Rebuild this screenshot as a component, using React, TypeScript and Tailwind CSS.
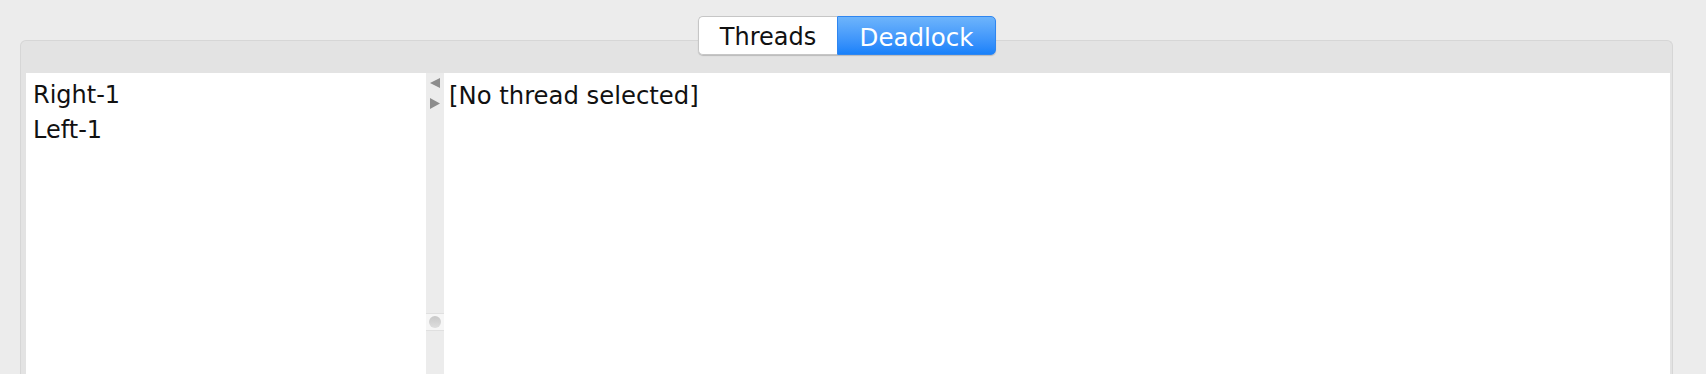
import React from "react"

const font = { fontFamily: '"DejaVu Sans", "Liberation Sans", sans-serif' }

function Tabs() {
  return (
    <div className="flex h-[39px] shadow-[0_1px_1px_rgba(0,0,0,0.18)] rounded-[5px]">
      <div className="w-[139px] h-[39px] border border-[#c6c6c6] border-r-0 rounded-l-[5px] bg-white text-[24px] leading-[35px] pt-[3px] text-center text-[#111]">
        Threads
      </div>
      <div className="w-[159px] h-[39px] rounded-r-[5px] border border-[#2f86f0] bg-gradient-to-b from-[#6db4fb] to-[#1881fa] text-[24.5px] leading-[35px] pt-[3px] text-center text-white">
        Deadlock
      </div>
    </div>
  )
}

function Divider() {
  return (
    <div className="w-[18px] bg-[#ececec] flex flex-col items-center">
      <svg width="12" height="40" viewBox="0 0 12 40" className="mt-[5px]">
        <polygon points="11,0 11,10 1,5" fill="#8d8d8d" />
        <polygon points="1,20 1,31 11,25.5" fill="#8d8d8d" />
      </svg>
      <div className="mt-[195px] w-full h-[18px] bg-[#f6f6f6] border-y border-[#e0e0e0] flex items-center justify-center">
        <div className="w-[12px] h-[12px] rounded-full bg-gradient-to-b from-[#c8c8c8] to-[#dedede]" />
      </div>
    </div>
  )
}

export default function App() {
  return (
    <div className="h-[374px] w-[1706px] bg-[#ececec] overflow-hidden relative" style={font}>
      <div className="ml-[20px] mt-[40px] w-[1653px] h-[334px] bg-[#e3e3e3] border border-b-0 border-[#d6d6d6] rounded-t-[6px] pl-[5px] pr-[2px] pt-[32px]">
        <div className="flex h-full bg-white">
          <div className="w-[400px] pt-[5px] pl-[7px] text-[24px] leading-[35px] text-[#111]">
            <div>Right-1</div>
            <div>Left-1</div>
          </div>
          <Divider />
          <div className="flex-1 pt-[6px] pl-[5px] text-[24.3px] leading-[34px] text-[#111]">
            [No thread selected]
          </div>
        </div>
      </div>
      <div className="absolute top-[16px] left-[698px]">
        <Tabs />
      </div>
    </div>
  )
}
